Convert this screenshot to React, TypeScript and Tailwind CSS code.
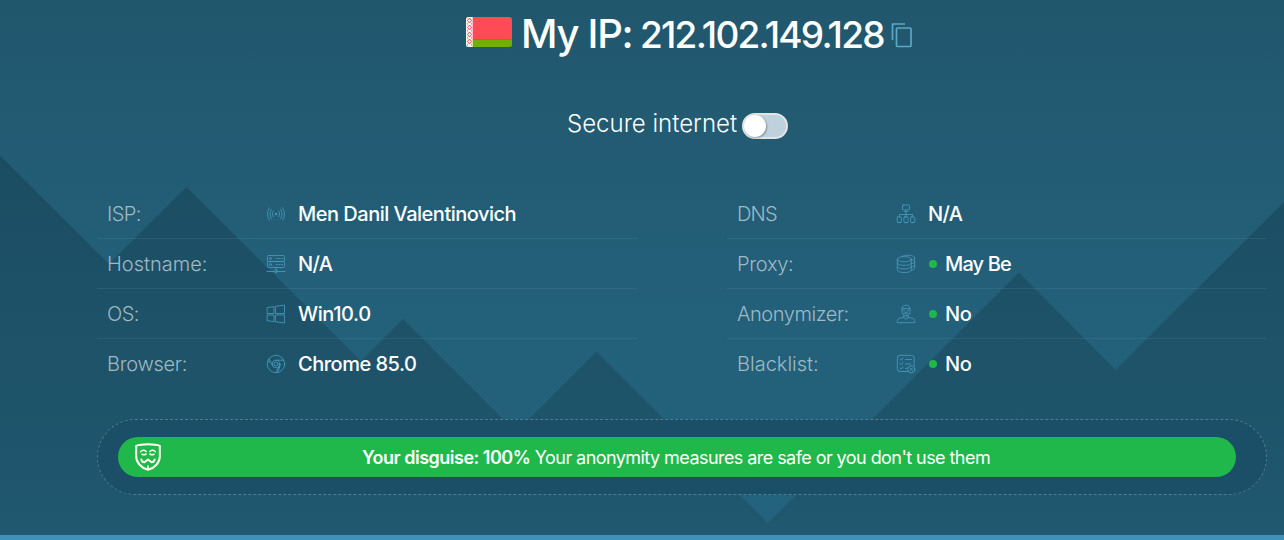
import type { ReactNode } from 'react';

interface InfoRow {
  label: string;
  labelClass: string;
  value: string;
  valueClass: string;
  icon: ReactNode;
  status?: boolean;
}

function Icon({ children }: { children: ReactNode }) {
  return (
    <svg
      viewBox="0 0 20 20"
      className="h-5 w-5 shrink-0 text-[#4a9dbf]"
      fill="none"
      stroke="currentColor"
      strokeWidth="0.8"
      strokeLinecap="round"
      strokeLinejoin="round"
    >
      {children}
    </svg>
  );
}

const SignalIcon = (
  <Icon>
    <circle cx="10" cy="10" r="0.8" fill="currentColor" />
    <path d="M7.2 7.2q-1.8 2.8 0 5.6M12.8 7.2q1.8 2.8 0 5.6M5.4 5.3q-3 4.7 0 9.4M14.6 5.3q3 4.7 0 9.4M3.4 3.8q-4 6.2 0 12.4M16.6 3.8q4 6.2 0 12.4" />
  </Icon>
);

const ServerIcon = (
  <Icon>
    <rect x="1.5" y="1.5" width="17" height="6" rx="1" />
    <rect x="1.5" y="7.5" width="17" height="6" rx="1" />
    <circle cx="4.5" cy="4.5" r="1" />
    <circle cx="4.5" cy="10.5" r="1" />
    <path d="M10.5 4.5h1M13 4.5h1M15.5 4.5h1M10.5 10.5h1M13 10.5h1M15.5 10.5h1M10 13.5v2.8M1 17.5h7.8M11.2 17.5H19" />
    <circle cx="10" cy="17.5" r="1.2" />
  </Icon>
);

const WindowsIcon = (
  <Icon>
    <path d="M1.5 3.6 8 2.6V9.5H1.5zM9.8 2.3l8.7-1.2v8.4H9.8zM1.5 11H8v6.7l-6.5-1zM9.8 11h8.7v8l-8.7-1.2z" />
  </Icon>
);

const ChromeIcon = (
  <Icon>
    <circle cx="10" cy="10" r="8.7" />
    <circle cx="10" cy="10" r="3.8" />
    <circle cx="10" cy="10" r="2" />
    <path d="M10 6.2h7.8M3 5l3.7 6.8M13.3 11.8 10 18.7M2 7l1.8 1.2M14.4 10.6l-2.6 7.8" />
  </Icon>
);

const NetworkIcon = (
  <Icon>
    <rect x="6.5" y="1" width="7" height="5" rx="0.8" />
    <path d="M8.3 7.3h3.4M10 7.3v5.7M3.3 13v-2.5h13.4V13M2 18.6h2.6M8.7 18.6h2.6M15.4 18.6H18" />
    <rect x="1.2" y="13" width="4.2" height="5.4" rx="0.6" />
    <rect x="7.9" y="13" width="4.2" height="5.4" rx="0.6" />
    <rect x="14.6" y="13" width="4.2" height="5.4" rx="0.6" />
  </Icon>
);

const DatabaseIcon = (
  <Icon>
    <ellipse cx="8.3" cy="5.2" rx="7" ry="2.6" />
    <path d="M1.3 5.2v10.6c0 1.6 3 2.8 7 2.8s7-1.2 7-2.8V5.2M1.3 8.7c0 1.6 3 2.7 7 2.7s7-1.1 7-2.7M1.3 12.2c0 1.6 3 2.7 7 2.7s7-1.1 7-2.7" />
    <path d="M6 2.5c1.3-.8 3.3-1.3 5.7-1.3 4 0 7 1.2 7 2.7v10c0 1.2-1.3 2-3.2 2.5M18.7 4c0 1.2-1.3 2-3.2 2.4M18.7 7.4c0 1.2-1.3 2-3.2 2.4M18.7 10.8c0 1.2-1.3 2-3.2 2.4" />
  </Icon>
);

const AnonymousIcon = (
  <Icon>
    <path d="M6 4.5C6 2.5 7.5 1.2 10 1.2s4 1.3 4 3.3v3.6c0 2.2-2 4-4 4s-4-1.8-4-4z" />
    <path d="M6 4.6h8M7.3 6.3l1.7.7M12.7 6.3l-1.7.7M7.8 9.4l2.2-.9 2.2.9M10 9.5v2M7.8 11.5v2.2l2.2 1.5 2.2-1.5v-2.2M7.8 13.2l-4.6 1.2c-1.4.4-2 1.5-2 2.8v1.5h17.6v-1.5c0-1.3-.6-2.4-2-2.8l-4.6-1.2" />
  </Icon>
);

const ChecklistIcon = (
  <Icon>
    <path d="M12 17.5H4a2.7 2.7 0 0 1-2.7-2.7V4A2.7 2.7 0 0 1 4 1.3h11.5A2.7 2.7 0 0 1 18.2 4v7.5" />
    <path d="M4 5.2l1.2 1L7 4M4 9.7l1.2 1L7 8.5M4 14.2l1.2 1L7 13M9.5 5.5h6M9.5 10h5M9.5 14.3h1.5" />
    <circle cx="15.3" cy="15.3" r="3.6" />
    <path d="M14 14l2.6 2.6M16.6 14L14 16.6" />
  </Icon>
);

const leftRows: InfoRow[] = [
  { label: 'ISP:', labelClass: 'tracking-[-0.6px]', value: 'Men Danil Valentinovich', valueClass: 'tracking-[-0.5px]', icon: SignalIcon },
  { label: 'Hostname:', labelClass: 'tracking-[0px]', value: 'N/A', valueClass: 'tracking-[-0.6px]', icon: ServerIcon },
  { label: 'OS:', labelClass: 'tracking-[-0.5px]', value: 'Win10.0', valueClass: 'tracking-[-0.4px]', icon: WindowsIcon },
  { label: 'Browser:', labelClass: 'tracking-[-0.3px]', value: 'Chrome 85.0', valueClass: 'tracking-[-0.5px]', icon: ChromeIcon },
];

const rightRows: InfoRow[] = [
  { label: 'DNS', labelClass: 'tracking-[-0.8px]', value: 'N/A', valueClass: 'tracking-[-0.6px]', icon: NetworkIcon },
  { label: 'Proxy:', labelClass: 'tracking-[-0.3px]', value: 'May Be', valueClass: 'tracking-[-0.85px]', icon: DatabaseIcon, status: true },
  { label: 'Anonymizer:', labelClass: 'tracking-[-0.45px]', value: 'No', valueClass: 'tracking-[-0.5px]', icon: AnonymousIcon, status: true },
  { label: 'Blacklist:', labelClass: 'tracking-[0px]', value: 'No', valueClass: 'tracking-[-0.5px]', icon: ChecklistIcon, status: true },
];

function InfoList({ rows }: { rows: InfoRow[] }) {
  return (
    <div className="w-[540px]">
      {rows.map((row) => (
        <div
          key={row.label}
          className="flex h-[50px] items-center border-b border-[#6190ac]/20 pl-2.5 text-xl whitespace-nowrap last:border-b-0"
        >
          <span className={`w-[159px] shrink-0 font-light text-[#9fb9c5] ${row.labelClass}`}>{row.label}</span>
          {row.icon}
          {row.status && <span className="ml-[13px] h-2 w-2 rounded-full bg-[#21b84b]" />}
          <span className={`${row.status ? 'ml-2' : 'ml-3'} font-medium text-white ${row.valueClass}`}>
            {row.value}
          </span>
        </div>
      ))}
    </div>
  );
}

function Mountains() {
  return (
    <svg className="absolute inset-0 h-[535px] w-[1284px]" viewBox="0 0 1284 535" aria-hidden="true">
      <defs>
        <linearGradient id="mountain" x1="0" y1="155" x2="0" y2="535" gradientUnits="userSpaceOnUse">
          <stop offset="0" stopColor="#1b4d62" />
          <stop offset="1" stopColor="#20586f" />
        </linearGradient>
      </defs>
      <path
        fill="url(#mountain)"
        d="M0 155.5 109 264 186.5 187 361 361 403 319 516 432 596.5 351.5 768 523 1019 272.5 1115.5 370 1284 202V535H0Z"
      />
    </svg>
  );
}

function BelarusFlag() {
  return (
    <svg className="h-[30px] w-[46px]" viewBox="0 0 46 30">
      <clipPath id="flag">
        <rect width="46" height="30" rx="2.5" />
      </clipPath>
      <g clipPath="url(#flag)">
        <path fill="#ff4b55" d="M0 0h46v22.5H0z" />
        <path fill="#73af00" d="M0 22.5h46V30H0z" />
        <path fill="#f5f5f5" d="M0 0h6.7v30H0z" />
        <path
          stroke="#ff4b55"
          strokeWidth="1"
          fill="none"
          d="M3.5 1 5.5 3.5 3.5 6 1.5 3.5zM3.5 8l2 2.5-2 2.5-2-2.5zM3.5 15l2 2.5-2 2.5-2-2.5zM3.5 22l2 2.5-2 2.5-2-2.5zM1 6.5l1 .8M6 6.5l-1 .8M1 13.5l1 .8M6 13.5l-1 .8M1 20.5l1 .8M6 20.5l-1 .8M1 27.5l1 .8M6 27.5l-1 .8"
        />
      </g>
    </svg>
  );
}

function MaskIcon() {
  return (
    <svg className="h-7 w-[26px]" viewBox="0 0 26 28" fill="none" stroke="#fffff0" strokeLinecap="round" strokeLinejoin="round">
      <path strokeWidth="2" d="M1.2 2.8C4 1.6 8 1.2 13 1.2S22 1.6 24.8 2.8v10.7c0 6-5 11.5-11.8 13.3C6.2 25 1.2 19.5 1.2 13.5z" />
      <path strokeWidth="1.3" d="M5.5 8.8C7 7 9.3 7 11.3 8.5M20.5 8.8C19 7 16.7 7 14.7 8.5" />
      <path strokeWidth="1.6" d="M7 11.3c1.3.7 2.7.7 4-.3M19 11.3c-1.3.7-2.7.7-4-.3" />
      <path strokeWidth="2" d="M6.3 16.5c.5 2 1.7 2.8 3.2 2.8l3.5-2.8 3.5 2.8c1.5 0 2.7-.8 3.2-2.8" />
      <path strokeWidth="1.6" d="M13 23v3" />
    </svg>
  );
}

export default function App() {
  return (
    <main className="relative h-[540px] w-[1284px] overflow-hidden border-b-[5px] border-[#3e92b8] bg-linear-to-b from-[#21576d] via-[#235f78] to-[#23637e] font-['Inter',sans-serif]">
      <Mountains />
      <div className="relative flex flex-col pl-[97px]">
        <h1 className="flex h-[70px] items-start pl-[369px] font-medium whitespace-nowrap text-white">
          <span className="pt-[17px]">
            <BelarusFlag />
          </span>
          <span className="ml-[9px] w-[119px] text-[40px] leading-[67px] tracking-[-1.3px]">My IP:</span>
          <span className="w-[249px] text-[37px] leading-[69px] tracking-[-1.77px]">212.102.149.128</span>
          <button aria-label="Copy IP" className="mt-[22px] ml-0.5">
            <svg className="h-[26px] w-[22px]" viewBox="0 0 22 26" fill="none" stroke="#5ba7c8" strokeWidth="1.7">
              <path d="M1.5 18V2H14" />
              <rect x="5.5" y="6" width="14.5" height="18.5" rx="1" />
            </svg>
          </button>
        </h1>

        <div className="mt-[37px] flex h-9 items-center pl-[470px] text-white">
          <span className="-mt-0.5 w-[175px] text-2xl font-light whitespace-nowrap">Secure internet</span>
          <button
            role="switch"
            aria-checked="false"
            aria-label="Secure internet"
            className="mt-0.5 flex h-[26px] w-[46px] items-center rounded-full border-2 border-[#e4e4e4] bg-[#bdd2dc]"
          >
            <span className="h-[22px] w-[22px] rounded-full bg-white shadow-[1px_1px_2px_rgba(0,0,0,0.3)]" />
          </button>
        </div>

        <div className="mt-[46px] flex gap-[90px]">
          <InfoList rows={leftRows} />
          <InfoList rows={rightRows} />
        </div>

        <div className="mt-[30px] flex h-[76px] w-[1170px] items-center rounded-full border border-dashed border-[#527d91] bg-[#1a4f67] pr-[30px] pl-5">
          <div className="flex h-10 w-full items-center rounded-full bg-[#21b84b] pl-[17px] text-white">
            <MaskIcon />
            <p className="mt-0.5 ml-[201px] text-lg whitespace-nowrap">
              <span className="font-semibold tracking-[-0.5px]">Your disguise: 100%</span>
              <span className="tracking-[-0.56px]"> Your anonymity measures are safe or you don't use them</span>
            </p>
          </div>
        </div>
      </div>
    </main>
  );
}
